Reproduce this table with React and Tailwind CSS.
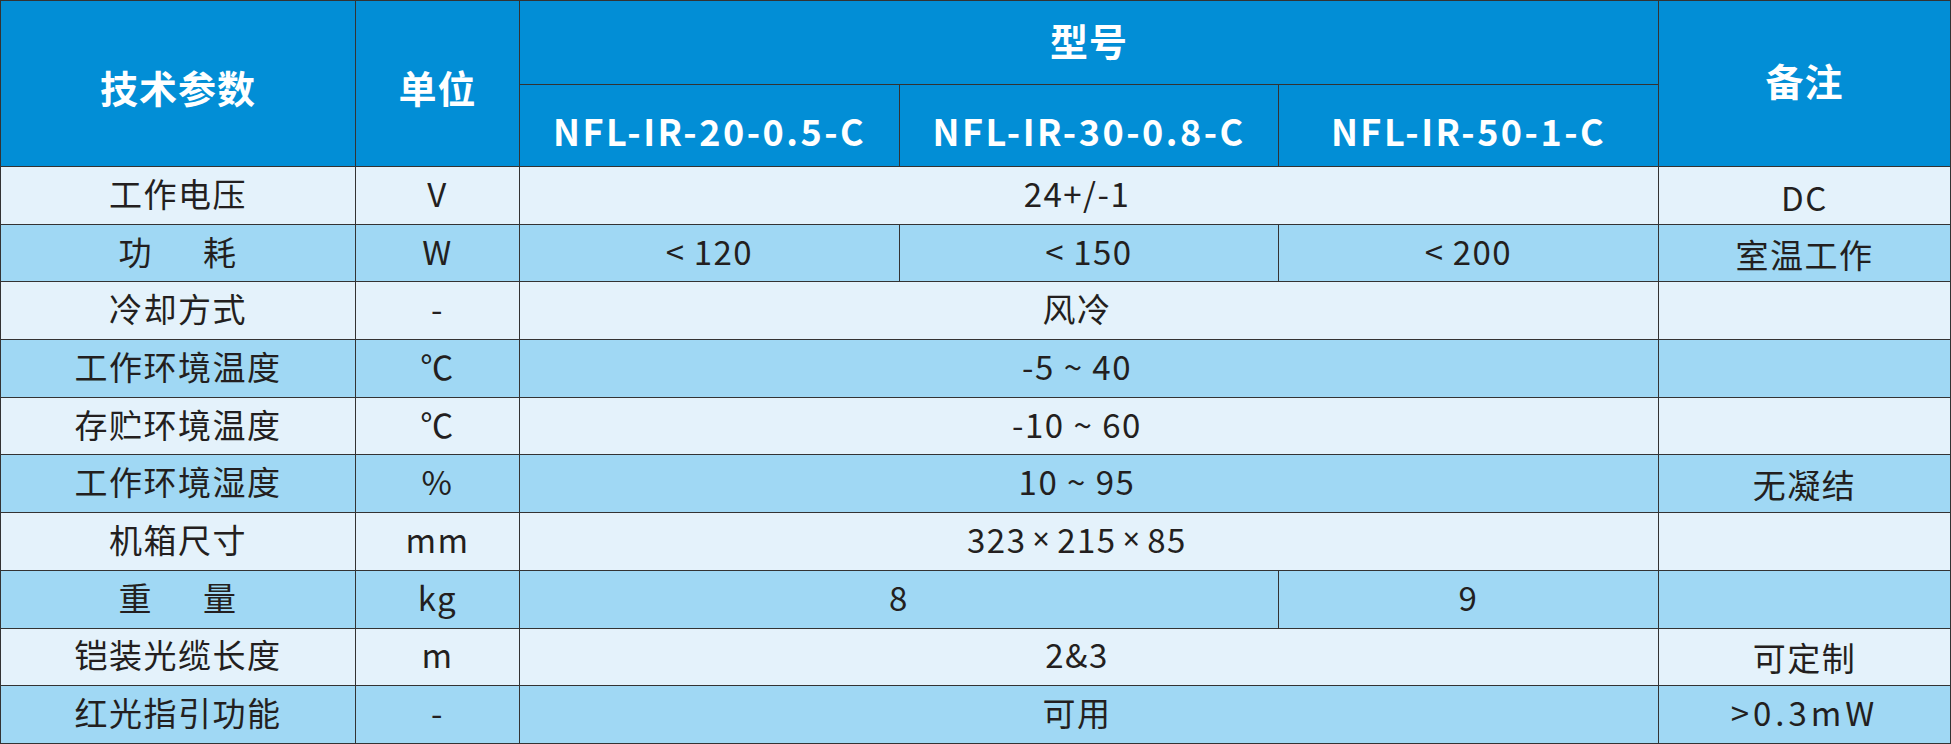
import React from "react";

const F = { fontFamily: '"Noto Sans CJK SC", "Noto Sans", sans-serif' };

function H({ children, className = "" }) {
  return (
    <div
      className={
        "flex items-center justify-center border-r-[1.5px] border-b-[1.5px] border-[#333] bg-[#028ed6] text-white font-bold " +
        className
      }
    >
      {children}
    </div>
  );
}

function C({ children, blue, className = "" }) {
  return (
    <div
      className={
        "flex items-center justify-center border-r-[1.5px] border-b-[1.5px] border-[#333] text-[#231f20] text-[33px] tracking-[1.5px] leading-none pb-[4px] " +
        (blue ? "bg-[#a0d8f4] " : "bg-[#e4f2fb] ") +
        className
      }
    >
      {children}
    </div>
  );
}

function Lt({ n }) {
  return (
    <span>
      <span className="mr-[8px]">&lt;</span>
      {n}
    </span>
  );
}

function X() {
  return <span className="mx-[6px] font-['Noto_Sans'] text-[30px]">×</span>;
}

export default function App() {
  return (
    <div style={F} className="w-[1951px] h-[744px] overflow-hidden bg-white">
      <div className="grid grid-cols-[355px_164px_380px_379px_380px_292px] grid-rows-[84px_82px_repeat(10,57.7px)] border-l-[1.5px] border-t-[1.5px] border-[#333]">
        <H className="row-span-2 text-[38px] tracking-[1px] pt-[6px]">技术参数</H>
        <H className="row-span-2 text-[38px] tracking-[1px] pt-[6px]">单位</H>
        <H className="col-span-3 text-[38px] tracking-[1px] pb-[6px]">型号</H>
        <H className="row-span-2 text-[38px] tracking-[1px] pb-[8px]">备注</H>
        <H className="text-[36px] tracking-[2.5px] pt-[8px]">NFL-IR-20-0.5-C</H>
        <H className="text-[36px] tracking-[2.5px] pt-[8px]">NFL-IR-30-0.8-C</H>
        <H className="text-[36px] tracking-[2.5px] pt-[8px]">NFL-IR-50-1-C</H>

        <C>工作电压</C>
        <C>V</C>
        <C className="col-span-3 pr-[24px]">24+/-1</C>
        <C className="pt-[8px]">DC</C>

        <C blue>
          功<span className="inline-block w-[50px]"></span>耗
        </C>
        <C blue>W</C>
        <C blue><Lt n="120" /></C>
        <C blue><Lt n="150" /></C>
        <C blue><Lt n="200" /></C>
        <C blue className="pt-[6px]">室温工作</C>

        <C>冷却方式</C>
        <C>-</C>
        <C className="col-span-3 pr-[24px]">风冷</C>
        <C></C>

        <C blue>工作环境温度</C>
        <C blue>℃</C>
        <C blue className="col-span-3 pr-[24px]">-5 ~ 40</C>
        <C blue></C>

        <C>存贮环境温度</C>
        <C>℃</C>
        <C className="col-span-3 pr-[24px]">-10 ~ 60</C>
        <C></C>

        <C blue>工作环境湿度</C>
        <C blue>%</C>
        <C blue className="col-span-3 pr-[24px]">10 ~ 95</C>
        <C blue className="pt-[6px]">无凝结</C>

        <C>机箱尺寸</C>
        <C>mm</C>
        <C className="col-span-3 pr-[24px]">
          <span>323</span>
          <X />
          <span>215</span>
          <X />
          <span>85</span>
        </C>
        <C></C>

        <C blue>
          重<span className="inline-block w-[50px]"></span>量
        </C>
        <C blue>kg</C>
        <C blue className="col-span-2">8</C>
        <C blue>9</C>
        <C blue></C>

        <C>铠装光缆长度</C>
        <C>m</C>
        <C className="col-span-3 pr-[24px]">2&amp;3</C>
        <C className="pt-[6px]">可定制</C>

        <C blue>红光指引功能</C>
        <C blue>-</C>
        <C blue className="col-span-3 pr-[24px]">可用</C>
        <C blue className="tracking-[4px]">&gt;0.3mW</C>
      </div>
    </div>
  );
}
